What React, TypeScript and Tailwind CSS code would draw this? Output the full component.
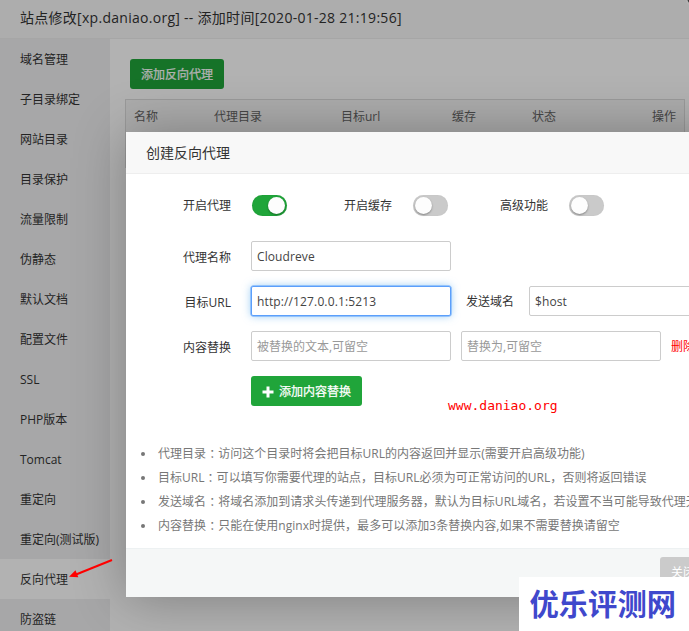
import type { ReactNode } from "react";

const sans = "font-['Open_Sans','Noto_Sans_CJK_SC',sans-serif]";

const menu = [
  "域名管理",
  "子目录绑定",
  "网站目录",
  "目录保护",
  "流量限制",
  "伪静态",
  "默认文档",
  "配置文件",
  "SSL",
  "PHP版本",
  "Tomcat",
  "重定向",
  "重定向(测试版)",
  "反向代理",
  "防盗链",
];

const notes = [
  ["代理目录", "访问这个目录时将会把目标URL的内容返回并显示(需要开启高级功能)"],
  ["目标URL", "可以填写你需要代理的站点，目标URL必须为可正常访问的URL，否则将返回错误"],
  ["发送域名", "将域名添加到请求头传递到代理服务器，默认为目标URL域名，若设置不当可能导致代理无"],
  ["内容替换", "只能在使用nginx时提供，最多可以添加3条替换内容,如果不需要替换请留空"],
];

function Toggle({ on = false }: { on?: boolean }) {
  return (
    <span
      className={
        on
          ? "flex h-[21px] w-[35px] justify-end rounded-full bg-[#20a53a] p-[2px] shadow-[inset_0_0_1px_#168a2d]"
          : "flex h-[21px] w-[35px] justify-start rounded-full bg-[#cacaca] p-[2px] shadow-[inset_0_0_1px_#bbb]"
      }
    >
      <span className="h-[17px] w-[17px] rounded-full bg-[#fdfdfd] shadow-[0_1px_2px_rgba(0,0,0,0.35)]" />
    </span>
  );
}

function Row({ label, children }: { label: string; children: ReactNode }) {
  return (
    <div className="flex h-[30px] items-center">
      <span className="w-[105px] pt-[3px] text-right">{label}</span>
      <div className="ml-5 flex items-center">{children}</div>
    </div>
  );
}

function Field({ value, placeholder, focused }: { value?: string; placeholder?: string; focused?: boolean }) {
  return (
    <input
      readOnly
      value={value ?? ""}
      placeholder={placeholder}
      className={
        focused
          ? "h-[30px] w-[200px] shrink-0 rounded-[2px] border border-[#5b9ffb] px-[5px] tracking-[0.13px] text-[#444] shadow-[0_0_0_0.5px_#5b9ffb,0_0_8px_rgba(82,168,236,0.6)] outline-none"
          : "h-[30px] w-[200px] shrink-0 rounded-[2px] border border-[#ccc] px-[5px] tracking-[0.1px] text-[#444] outline-none placeholder:tracking-normal placeholder:text-[#999]"
      }
    />
  );
}

function SitePanel() {
  return (
    <div className="flex h-[631px] flex-col bg-white">
      <header className="flex h-[39px] shrink-0 items-center border-b border-[#eee] bg-[#f8f8f8] pb-[2px] pl-5 text-[14px] tracking-[0.28px] text-[#333]">
        站点修改[xp.daniao.org] -- 添加时间[2020-01-28 21:19:56]
      </header>
      <div className="flex min-h-0 flex-1">
        <nav className="w-[110px] shrink-0 overflow-hidden bg-[#f0f0f1]">
          {menu.map((item) => (
            <div
              key={item}
              className={
                item === "反向代理"
                  ? "flex h-10 items-center bg-white pl-5 pt-[2px] text-[#333]"
                  : "flex h-10 items-center pl-5 pt-[2px] text-[#333]"
              }
            >
              {item}
            </div>
          ))}
        </nav>
        <main className="flex-1 pl-[15px] pt-5">
          <button className="ml-[5px] flex h-[30px] w-[94px] items-center justify-center rounded-[3px] bg-[#20a53a] pt-[2px] text-white [-webkit-text-stroke:0.25px_white]">
            添加反向代理
          </button>
          <div className="mt-[10px] h-[69px] w-[560px] border border-[#ddd] bg-[#f6f6f6] text-[#666]">
            <div className="flex h-[34px] items-center pl-2 pr-2">
              <span className="w-[80px]">名称</span>
              <span className="w-[127px]">代理目录</span>
              <span className="w-[111px]">目标url</span>
              <span className="w-[80px]">缓存</span>
              <span className="flex-1">状态</span>
              <span>操作</span>
            </div>
          </div>
        </main>
      </div>
    </div>
  );
}

function ProxyDialog() {
  return (
    <section className="absolute left-[126px] top-[132px] flex h-[465px] w-[630px] flex-col bg-white text-[#333] shadow-[1px_1px_50px_rgba(0,0,0,0.3)]">
      <h2 className="flex h-[42px] shrink-0 items-center border-b border-[#eee] bg-[#f8f8f8] pl-5 text-[14px]">
        创建反向代理
      </h2>
      <div className="flex flex-1 flex-col whitespace-nowrap pt-4">
        <div className="flex h-[30px] items-center">
          <span className="w-[105px] pt-[2px] text-right">开启代理</span>
          <span className="ml-[21px]"><Toggle on /></span>
          <span className="ml-[57px] w-[49px] pt-[2px]">开启缓存</span>
          <span className="ml-[20px]"><Toggle /></span>
          <span className="ml-[52px] w-[49px] pt-[2px]">高级功能</span>
          <span className="ml-[20px]"><Toggle /></span>
        </div>
        <div className="mt-[21px] flex flex-col gap-[15px]">
          <Row label="代理名称">
            <Field value="Cloudreve" />
          </Row>
          <Row label="目标URL">
            <Field value="http://127.0.0.1:5213" focused />
            <span className="ml-[15px] w-[63px] pt-[2px]">发送域名</span>
            <Field value="$host" />
          </Row>
          <Row label="内容替换">
            <Field placeholder="被替换的文本,可留空" />
            <span className="w-[10px]" />
            <Field placeholder="替换为,可留空" />
            <span className="ml-[10px] pt-[2px] text-[#f00]">删除</span>
          </Row>
          <div className="flex h-[30px] items-center pl-[125px]">
            <button className="flex h-[30px] w-[111px] items-center justify-center gap-[5px] rounded-[3px] bg-[#20a53a] pt-[2px] text-white [-webkit-text-stroke:0.25px_white]">
              <svg width="12" height="12" viewBox="0 0 12 12" fill="currentColor" stroke="none">
                <path d="M4.5 0.5h3v4h4v3h-4v4h-3v-4h-4v-3h4z" />
              </svg>
              添加内容替换
            </button>
          </div>
        </div>
        <ul className="mt-[36px] list-none tracking-[0.03px] text-[#777]">
          {notes.map(([term, text]) => (
            <li key={term} className="flex h-6 items-center pl-[15px]">
              <span className="mr-[13px] h-1 w-1 shrink-0 rounded-full bg-[#777]" />
              <span>
                {term}
                <span className="relative top-px font-['Noto_Sans_CJK_JP',sans-serif] leading-none">：</span>
                {text}
              </span>
            </li>
          ))}
        </ul>
      </div>
      <footer className="flex h-[49px] shrink-0 border-t border-[#edf1f2] bg-[#f5f7f7] pl-[534px] pt-2">
        <button className="flex h-[30px] w-[46px] items-center justify-center rounded-[3px] bg-[#cbcbcb] pt-[2px] text-white">
          关闭
        </button>
      </footer>
    </section>
  );
}

export default function App() {
  return (
    <div className={`relative h-[631px] w-[689px] overflow-hidden text-[12px] leading-[18px] ${sans}`}>
      <SitePanel />
      <div className="absolute -top-[14px] left-[685px] h-[22px] w-[22px] rounded-full border-2 border-white bg-[#555]" />
      <div className="absolute inset-0 bg-black/30" />
      <ProxyDialog />
      <svg className="absolute left-[64px] top-[554px]" width="52" height="30" viewBox="0 0 52 30">
        <path d="M48 6L12 20.5" stroke="#f00" strokeWidth="2" fill="none" />
        <path d="M5 22.8L11.5 16.2L14.3 23.2z" fill="#f00" />
      </svg>
      <span className="absolute left-[448px] top-[397px] font-['DejaVu_Sans_Mono',monospace] text-[13px] text-[#f00]">
        www.daniao.org
      </span>
      <div className="absolute left-[519px] top-[577px] flex h-[54px] w-[170px] items-center bg-white pl-[10.5px] pt-px text-[29.3px] font-bold leading-none text-[#3f48cc]">
        优乐评测网
      </div>
    </div>
  );
}
